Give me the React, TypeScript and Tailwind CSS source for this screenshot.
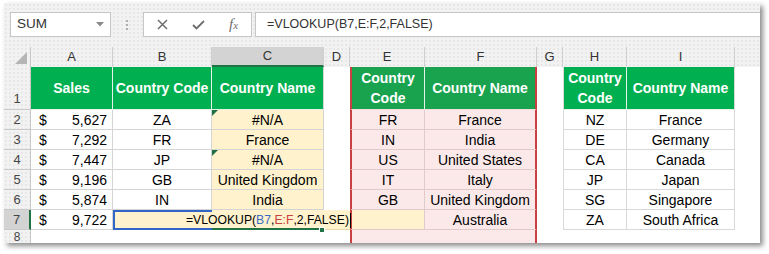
import React from "react";

type Row = {
  n: number;
  amt: string;
  code: string;
  name: string;
  tri?: boolean;
  e: string;
  f: string;
  h: string;
  i: string;
};

const rows: Row[] = [
  { n: 2, amt: "5,627", code: "ZA", name: "#N/A", tri: true, e: "FR", f: "France", h: "NZ", i: "France" },
  { n: 3, amt: "7,292", code: "FR", name: "France", e: "IN", f: "India", h: "DE", i: "Germany" },
  { n: 4, amt: "7,447", code: "JP", name: "#N/A", tri: true, e: "US", f: "United States", h: "CA", i: "Canada" },
  { n: 5, amt: "9,196", code: "GB", name: "United Kingdom", e: "IT", f: "Italy", h: "JP", i: "Japan" },
  { n: 6, amt: "5,874", code: "IN", name: "India", e: "GB", f: "United Kingdom", h: "SG", i: "Singapore" },
];

const base = "flex items-center justify-center overflow-hidden whitespace-nowrap text-[14px] text-black pt-[1px]";
const rowHdr = "flex items-center justify-center border-r border-b border-[#c9c9c9] text-[13px] text-[#444]";
const colHdr = "flex items-center justify-center border-r border-[#cfcfcf] text-[13px] text-[#333]";
const gA = "border-r border-b border-[#d4d4d4]";
const pink = "bg-[#fbe9e9] border-b border-[#e0caca]";
const hi = "border-r border-b border-[#d9d9d9]";

function ErrTri() {
  return (
    <span className="absolute left-0 top-0 w-0 h-0 border-t-[6px] border-t-[#1e7145] border-r-[6px] border-r-transparent" />
  );
}

function HeaderCell({ children, className }: { children: React.ReactNode; className: string }) {
  return (
    <div className={"flex items-center justify-center text-center font-bold text-white text-[14px] leading-[20px] " + className}>
      {children}
    </div>
  );
}

export default function App() {
  return (
    <div className="w-[769px] h-[254px] bg-white overflow-hidden font-['Liberation_Sans',Arial,sans-serif]">
      <div className="ml-[4px] mt-[3px] w-[756px] h-[240px] bg-[#f2f2f2] bg-[radial-gradient(circle,#dadada_0.6px,transparent_0.8px)] bg-[length:4px_4px] shadow-[3px_3px_5px_rgba(0,0,0,0.45)] flex flex-col">
        {/* formula bar */}
        <div className="h-[44px] flex items-start pt-[9px] pl-[6px]">
          <div className="w-[101px] h-[25px] bg-white border border-[#c6c6c6] flex items-center justify-between pl-[6px] pr-[6px]">
            <span className="text-[13.5px] text-[#333]">SUM</span>
            <svg width="8" height="5" viewBox="0 0 8 5">
              <path d="M0 0 L8 0 L4 4.5 Z" fill="#8a8a8a" />
            </svg>
          </div>
          <div className="w-[32px] h-[25px] flex flex-col items-center justify-center gap-[2px]">
            <span className="w-[2px] h-[2px] bg-[#b0b0b0]" />
            <span className="w-[2px] h-[2px] bg-[#b0b0b0]" />
            <span className="w-[2px] h-[2px] bg-[#b0b0b0]" />
          </div>
          <div className="w-[109px] h-[25px] bg-white border border-[#c6c6c6] flex items-center pl-[13px]">
            <svg width="11" height="11" viewBox="0 0 11 11">
              <path d="M1 1 L10 10 M10 1 L1 10" stroke="#6e6e6e" strokeWidth="1.5" />
            </svg>
            <svg width="13" height="10" viewBox="0 0 13 10" className="ml-[24px]">
              <path d="M1 5 L4.5 8.5 L12 1" stroke="#6e6e6e" strokeWidth="1.8" fill="none" />
            </svg>
            <span className="ml-[24px] font-['Liberation_Serif',serif] italic text-[#6e6e6e] text-[15px] leading-none">
              f<span className="text-[11px]">x</span>
            </span>
          </div>
          <div className="flex-1 ml-[3px] h-[25px] bg-white border border-[#c6c6c6] border-r-0 flex items-center pl-[11px]">
            <span className="text-[12.5px] text-[#333]">=VLOOKUP(B7,E:F,2,FALSE)</span>
          </div>
        </div>

        {/* sheet */}
        <div className="grid grid-cols-[27px_82px_99px_112px_26px_75px_112px_26px_64px_108px_25px] grid-rows-[20px_43px_20px_20px_20px_20px_20px_20px_13px]">
          {/* column headers */}
          <div className="relative border-r border-[#c9c9c9]">
            <svg width="12" height="12" viewBox="0 0 12 12" className="absolute right-[3px] bottom-[3px]">
              <path d="M12 0 L12 12 L0 12 Z" fill="#b5b5b5" />
            </svg>
          </div>
          <div className={colHdr}>A</div>
          <div className={colHdr}>B</div>
          <div className={colHdr + " bg-[#d3d3d3] border-b-2 border-b-[#217346] text-[#1d5e3a]"}>C</div>
          <div className={colHdr}>D</div>
          <div className={colHdr}>E</div>
          <div className={colHdr}>F</div>
          <div className={colHdr}>G</div>
          <div className={colHdr}>H</div>
          <div className={colHdr}>I</div>
          <div />

          {/* row 1 */}
          <div className={rowHdr + " !items-end pb-[1px]"}>1</div>
          <HeaderCell className="bg-[#00b050] border-r border-b border-[#e6f3ea]">Sales</HeaderCell>
          <HeaderCell className="bg-[#00b050] border-r border-b border-[#e6f3ea]">Country Code</HeaderCell>
          <HeaderCell className="bg-[#00b050] border-r border-b border-[#d4d4d4] border-b-[#e6f3ea]">Country Name</HeaderCell>
          <div className="bg-white" />
          <HeaderCell className="bg-[#19a34f] border-l-2 border-l-[#c8403f] border-r border-r-[#e6f3ea] border-b border-b-[#f3dede]">
            Country<br />Code
          </HeaderCell>
          <HeaderCell className="bg-[#19a34f] border-r-2 border-r-[#c8403f] border-b border-b-[#f3dede]">Country Name</HeaderCell>
          <div className="bg-white" />
          <HeaderCell className="bg-[#00b050] border-l border-l-[#d9d9d9] border-r border-r-[#e6f3ea] border-b border-b-[#e6f3ea]">
            Country<br />Code
          </HeaderCell>
          <HeaderCell className="bg-[#00b050] border-r border-r-[#d9d9d9] border-b border-b-[#e6f3ea]">Country Name</HeaderCell>
          <div className="bg-white" />

          {/* rows 2-6 */}
          {rows.map((r) => (
            <React.Fragment key={r.n}>
              <div className={rowHdr}>{r.n}</div>
              <div className={base + " bg-white !justify-between pl-[8px] pr-[5px] " + gA}>
                <span>$</span>
                <span>{r.amt}</span>
              </div>
              <div className={base + " bg-white " + gA}>{r.code}</div>
              <div className={base + " relative bg-[#fff2cc] " + gA}>
                {r.tri && <ErrTri />}
                {r.name}
              </div>
              <div className="bg-white" />
              <div className={base + " " + pink + " border-l-2 border-l-[#c8403f] border-r border-r-[#e0caca]"}>{r.e}</div>
              <div className={base + " " + pink + " border-r-2 border-r-[#c8403f]"}>{r.f}</div>
              <div className="bg-white" />
              <div className={base + " bg-white border-l border-l-[#d9d9d9] " + hi}>{r.h}</div>
              <div className={base + " bg-white " + hi}>{r.i}</div>
              <div className="bg-white" />
            </React.Fragment>
          ))}

          {/* row 7 */}
          <div className={rowHdr + " bg-[#d3d3d3] border-r-2 border-r-[#217346] text-[#1d5e3a]"}>7</div>
          <div className={base + " bg-white !justify-between pl-[8px] pr-[5px] " + gA}>
            <span>$</span>
            <span>9,722</span>
          </div>
          <div className="col-span-3 relative flex bg-[#fff2cc]">
            <div className="w-[99px] h-full border-2 border-r-0 border-[#2f66c8]" />
            <div className="w-[112px] h-full border-b-2 border-[#217346]" />
            <div className="flex-1 h-full border-b border-[#ead9a8]" />
            <span className="absolute left-[206px] bottom-[-3px] w-[6px] h-[6px] bg-[#217346] border border-white" />
            <div className="absolute left-[73px] top-0 h-full flex items-center whitespace-nowrap text-[12.2px] text-black">
              <span>=VLOOKUP(</span>
              <span className="text-[#3b6dc7]">B7</span>
              <span>,</span>
              <span className="text-[#c8403f]">E:F</span>
              <span>,2,FALSE)</span>
              <span className="ml-[1px] w-[1px] h-[15px] bg-black" />
            </div>
          </div>
          <div className={base + " bg-[#fff2cc] border-b border-[#e0caca] border-l-2 border-l-[#c8403f] border-r border-r-[#e0caca]"} />
          <div className={base + " " + pink + " border-r-2 border-r-[#c8403f]"}>Australia</div>
          <div className="bg-white" />
          <div className={base + " bg-white border-l border-l-[#d9d9d9] " + hi}>ZA</div>
          <div className={base + " bg-white " + hi}>South Africa</div>
          <div className="bg-white" />

          {/* row 8 */}
          <div className="border-r border-[#c9c9c9] flex items-end justify-center text-[12px] leading-[12px] text-[#444]">8</div>
          <div className="bg-white" />
          <div className="bg-white" />
          <div className="bg-white" />
          <div className="bg-white" />
          <div className="bg-[#fbe9e9] border-l-2 border-l-[#c8403f]" />
          <div className="bg-[#fbe9e9] border-r-2 border-r-[#c8403f]" />
          <div className="bg-white" />
          <div className="bg-white" />
          <div className="bg-white" />
          <div className="bg-white" />
        </div>
      </div>
    </div>
  );
}
